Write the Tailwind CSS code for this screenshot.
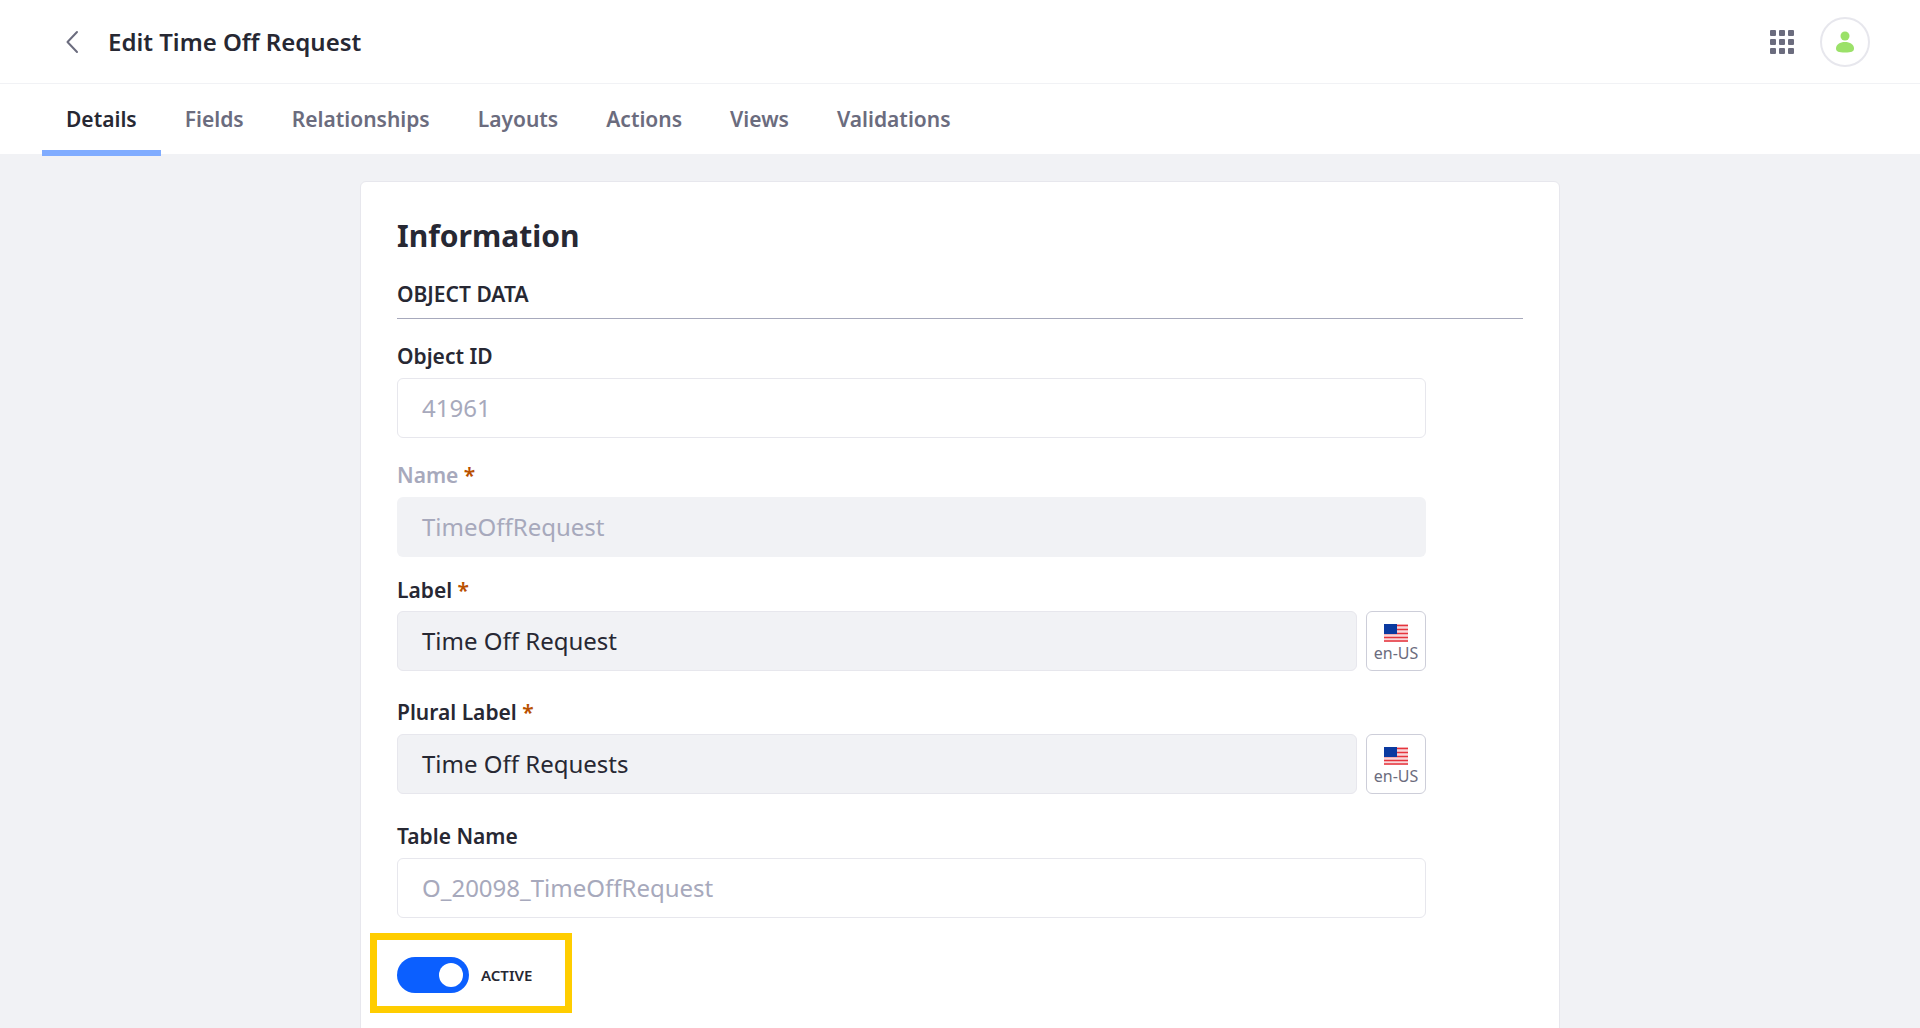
<!DOCTYPE html>
<html lang="en">
<head>
    <meta charset="UTF-8">
    <meta name="viewport" content="width=device-width, initial-scale=1.0">
    <title>Edit Time Off Request</title>
    <script src="https://cdn.jsdelivr.net/npm/@tailwindcss/browser@4"></script>
</head>
<body class="h-[1028px] overflow-hidden bg-[#f1f2f5] font-['Noto_Sans',sans-serif] text-[#272833]">
    <!-- Top bar -->
    <header class="h-[84px] bg-white border-b border-[#f1f2f5] flex items-center pl-[64px] pr-[50px]">
        <svg class="w-[16px] h-[24px] text-[#6b6c7e]" viewBox="0 0 16 24" fill="none" stroke="currentColor" stroke-width="2" stroke-linecap="round" stroke-linejoin="round"><path d="M13 2 3.500 12 13 22"/></svg>
        <h1 class="ml-[28px] text-[24px] font-semibold leading-none">Edit Time Off Request</h1>
        <div class="ml-auto flex items-center gap-[26px]">
            <div class="grid grid-cols-3 gap-[3px]">
                <span class="w-[6px] h-[6px] rounded-[1px] bg-[#6b6c7e]"></span>
                <span class="w-[6px] h-[6px] rounded-[1px] bg-[#6b6c7e]"></span>
                <span class="w-[6px] h-[6px] rounded-[1px] bg-[#6b6c7e]"></span>
                <span class="w-[6px] h-[6px] rounded-[1px] bg-[#6b6c7e]"></span>
                <span class="w-[6px] h-[6px] rounded-[1px] bg-[#6b6c7e]"></span>
                <span class="w-[6px] h-[6px] rounded-[1px] bg-[#6b6c7e]"></span>
                <span class="w-[6px] h-[6px] rounded-[1px] bg-[#6b6c7e]"></span>
                <span class="w-[6px] h-[6px] rounded-[1px] bg-[#6b6c7e]"></span>
                <span class="w-[6px] h-[6px] rounded-[1px] bg-[#6b6c7e]"></span>
            </div>
            <div class="w-[50px] h-[50px] rounded-full border-2 border-[#e7e7ed] flex items-center justify-center">
                <svg class="w-[18px] h-[22px] text-[#9be169]" viewBox="0 0 18 22" fill="currentColor"><circle cx="9" cy="5" r="4.500"/><path d="M9 11c5 0 9 2.500 9 6.500 0 3-2.500 4-9 4s-9-1-9-4C0 13.500 4 11 9 11z"/></svg>
            </div>
        </div>
    </header>

    <!-- Tabs -->
    <nav class="h-[70px] bg-white flex pl-[42px] text-[21px] font-semibold text-[#6b6c7e]">
        <a class="h-[72px] px-[24px] flex items-center pt-[6px] border-b-[6px] border-[#80acff] text-[#272833]">Details</a>
        <a class="px-[24px] pt-[2px] flex items-center">Fields</a>
        <a class="px-[24px] pt-[2px] flex items-center">Relationships</a>
        <a class="px-[24px] pt-[2px] flex items-center">Layouts</a>
        <a class="px-[24px] pt-[2px] flex items-center">Actions</a>
        <a class="px-[24px] pt-[2px] flex items-center">Views</a>
        <a class="px-[24px] pt-[2px] flex items-center">Validations</a>
    </nav>

    <!-- Card -->
    <main class="w-[1200px] ml-[360px] mt-[27px] bg-white border border-[#e7e7ed] rounded-[6px] px-[36px] pt-[34px] h-[900px]">
        <h2 class="text-[30px] font-bold leading-[40px]">Information</h2>
        <div class="mt-[24px] h-[39px] border-b border-[#a7a9bc] text-[21px] font-semibold leading-[28px]">OBJECT DATA</div>

        <div class="w-[1029px]">
            <label class="block mt-[23px] text-[21px] font-semibold leading-[28px]">Object ID</label>
            <div class="mt-[8px] h-[60px] px-[24px] flex items-center bg-white border border-[#e7e7ed] rounded-[6px] text-[24px] text-[#a7a9bc]">41961</div>

            <label class="block mt-[23px] text-[21px] font-semibold leading-[28px] text-[#a7a9bc]">Name <span class="text-[#b95000]">*</span></label>
            <div class="mt-[8px] h-[60px] px-[25px] flex items-center bg-[#f1f2f5] rounded-[6px] text-[24px] text-[#a7a9bc]">TimeOffRequest</div>

            <label class="block mt-[19px] text-[21px] font-semibold leading-[28px]">Label <span class="text-[#b95000]">*</span></label>
            <div class="mt-[7px] flex gap-[9px]">
                <div class="flex-1 h-[60px] px-[24px] flex items-center bg-[#f1f2f5] border border-[#e7e7ed] rounded-[6px] text-[24px]">Time Off Request</div>
                <button class="w-[60px] h-[60px] pt-[5px] bg-white border border-[#cdced9] rounded-[6px] flex flex-col items-center justify-center text-[16px] leading-[20px] text-[#6b6c7e]">
                    <svg class="w-[24px] h-[18px] mb-[1px]" viewBox="0 0 24 18"><rect width="24" height="18" fill="#f8d7da"/><path d="M0 1.500h24M0 5.500h24M0 9.500h24M0 13.500h24M0 17h24" stroke="#e5343d" stroke-width="1.500"/><rect width="13" height="10" fill="#0b3aa0"/></svg>
                    en-US
                </button>
            </div>

            <label class="block mt-[27px] text-[21px] font-semibold leading-[28px]">Plural Label <span class="text-[#b95000]">*</span></label>
            <div class="mt-[8px] flex gap-[9px]">
                <div class="flex-1 h-[60px] px-[24px] flex items-center bg-[#f1f2f5] border border-[#e7e7ed] rounded-[6px] text-[24px]">Time Off Requests</div>
                <button class="w-[60px] h-[60px] pt-[5px] bg-white border border-[#cdced9] rounded-[6px] flex flex-col items-center justify-center text-[16px] leading-[20px] text-[#6b6c7e]">
                    <svg class="w-[24px] h-[18px] mb-[1px]" viewBox="0 0 24 18"><rect width="24" height="18" fill="#f8d7da"/><path d="M0 1.500h24M0 5.500h24M0 9.500h24M0 13.500h24M0 17h24" stroke="#e5343d" stroke-width="1.500"/><rect width="13" height="10" fill="#0b3aa0"/></svg>
                    en-US
                </button>
            </div>

            <label class="block mt-[28px] text-[21px] font-semibold leading-[28px]">Table Name</label>
            <div class="mt-[8px] h-[60px] px-[24px] flex items-center bg-white border border-[#e7e7ed] rounded-[6px] text-[24px] text-[#a7a9bc]">O_20098_TimeOffRequest</div>

            <!-- Active toggle, highlighted -->
            <div class="mt-[15px] -ml-[27px] w-[202px] h-[80px] border-[7px] border-[#ffcd00] pl-[20px] pt-[4px] flex items-center">
                <span class="w-[72px] h-[36px] rounded-full bg-[#0b5fff] flex items-center justify-end pr-[6px]">
                    <span class="w-[24px] h-[24px] rounded-full bg-white"></span>
                </span>
                <span class="ml-[12px] text-[15px] font-semibold text-[#272833]">ACTIVE</span>
            </div>
        </div>
    </main>
</body>
</html>
